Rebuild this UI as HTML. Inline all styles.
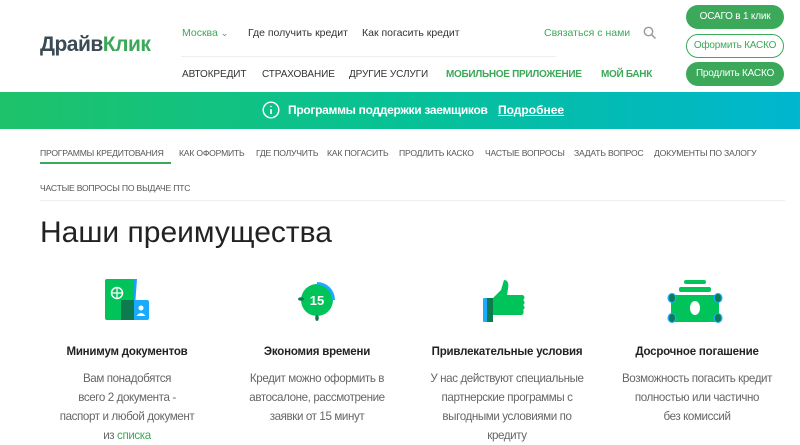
<!DOCTYPE html>
<html><head><meta charset="utf-8"><style>
*{margin:0;padding:0;box-sizing:border-box}
body{width:800px;height:445px;overflow:hidden;background:#fff;font-family:"Liberation Sans",sans-serif;color:#333;position:relative}
.a{position:absolute;white-space:nowrap}
.btn{position:absolute;left:686px;width:98px;height:24px;border-radius:12px;background:#3ca85a;color:#fff;font-size:10px;text-align:center;line-height:24px;letter-spacing:-0.2px}
.tab{position:absolute;top:148px;font-size:8.6px;color:#555;letter-spacing:-0.2px}
.n2{position:absolute;top:69px;font-size:10px;color:#333;white-space:nowrap;letter-spacing:-0.1px}
.col{position:absolute;width:190px;text-align:center}
.col h3{font-size:11.5px;font-weight:bold;color:#222;position:absolute;top:346px;width:190px;letter-spacing:-0.2px}
.col p{font-size:11.6px;line-height:19px;color:#666;position:absolute;top:369px;width:190px;letter-spacing:-0.4px}
</style></head><body>
<div class="a" style="left:40px;top:33px;font-size:21px;font-weight:bold;color:#3b4a55;letter-spacing:-0.5px">Драйв<span style="color:#3ca85a">Клик</span></div>
<div class="a" style="left:182px;top:27px;font-size:10.5px;color:#3ca85a">Москва <span style="font-size:9px">&#8964;</span></div>
<div class="a" style="left:248px;top:27px;font-size:10.5px;color:#333">Где получить кредит</div>
<div class="a" style="left:362px;top:27px;font-size:10.5px;color:#333">Как погасить кредит</div>
<div class="a" style="left:544px;top:27px;font-size:10.5px;color:#3ca85a">Связаться с нами</div>
<svg class="a" style="left:643px;top:26px" width="14" height="14"><circle cx="5.5" cy="5.5" r="4.2" fill="none" stroke="#999" stroke-width="1.4"/><path d="M8.6 8.6L12.5 12.5" stroke="#999" stroke-width="1.5"/></svg>
<div class="a" style="left:181px;top:56px;width:375px;height:1px;background:#eee"></div>
<div class="n2" style="left:182px">АВТОКРЕДИТ</div>
<div class="n2" style="left:262px">СТРАХОВАНИЕ</div>
<div class="n2" style="left:349px">ДРУГИЕ УСЛУГИ</div>
<div class="n2" style="left:446px;color:#3ca85a;font-weight:bold;letter-spacing:-0.3px">МОБИЛЬНОЕ ПРИЛОЖЕНИЕ</div>
<div class="n2" style="left:601px;color:#3ca85a;font-weight:bold;letter-spacing:-0.3px">МОЙ БАНК</div>
<div class="btn" style="top:5px">ОСАГО в 1 клик</div>
<div class="btn" style="top:34px;background:#fff;color:#3ca85a;border:1px solid #3ca85a;line-height:22px">Оформить КАСКО</div>
<div class="btn" style="top:62px">Продлить КАСКО</div>
<div class="a" style="left:0;top:92px;width:800px;height:37px;background:linear-gradient(90deg,#1ec26a,#07c195 50%,#00b6d0)"></div>
<svg class="a" style="left:262px;top:101px" width="18" height="18"><circle cx="9" cy="9" r="7.8" fill="none" stroke="#fff" stroke-width="1.4"/><path d="M9 8v5M9 5v1" stroke="#fff" stroke-width="1.6"/></svg>
<div class="a" style="left:288px;top:103px;font-size:12px;font-weight:bold;color:#fff;letter-spacing:-0.3px">Программы поддержки заемщиков</div>
<div class="a" style="left:498px;top:103px;font-size:12px;font-weight:bold;color:#fff;text-decoration:underline">Подробнее</div>
<div class="tab" style="left:40px">ПРОГРАММЫ КРЕДИТОВАНИЯ</div>
<div class="a" style="left:40px;top:162px;width:131px;height:2px;background:#3ca85a"></div>
<div class="tab" style="left:179px">КАК ОФОРМИТЬ</div>
<div class="tab" style="left:256px">ГДЕ ПОЛУЧИТЬ</div>
<div class="tab" style="left:327px">КАК ПОГАСИТЬ</div>
<div class="tab" style="left:399px">ПРОДЛИТЬ КАСКО</div>
<div class="tab" style="left:485px">ЧАСТЫЕ ВОПРОСЫ</div>
<div class="tab" style="left:574px">ЗАДАТЬ ВОПРОС</div>
<div class="tab" style="left:654px">ДОКУМЕНТЫ ПО ЗАЛОГУ</div>
<div class="tab" style="left:40px;top:183px">ЧАСТЫЕ ВОПРОСЫ ПО ВЫДАЧЕ ПТС</div>
<div class="a" style="left:40px;top:200px;width:745px;height:1px;background:#eee"></div>
<div class="a" style="left:40px;top:216px;font-size:30px;color:#222">Наши преимущества</div>
<svg class="a" style="left:100px;top:278px" width="52" height="44"><rect x="5" y="1" width="30" height="41" rx="2" fill="#00c35a"/><path d="M34 1l3 0-3 41z" fill="#1aa0ff"/><rect x="21" y="22" width="28" height="20" rx="2" fill="#1aabff"/><rect x="21" y="22" width="13" height="20" fill="#0d7a50"/><circle cx="17" cy="15" r="5.5" fill="none" stroke="#fff" stroke-width="1.5"/><path d="M11.5 15h11M17 9.5v11" stroke="#fff" stroke-width="1.2"/><circle cx="41" cy="30" r="2.5" fill="#fff"/><path d="M36.5 38q4.5-6 9 0z" fill="#fff"/></svg>
<svg class="a" style="left:295px;top:278px" width="46" height="48"><circle cx="22" cy="22" r="16" fill="#00c35a"/><path d="M22 4a18 18 0 0 1 18 18h-3a15 15 0 0 0-15-15z" fill="#1aabff"/><ellipse cx="6" cy="21" rx="3" ry="1.8" fill="#0d7a50"/><ellipse cx="22" cy="40" rx="1.8" ry="3" fill="#0d7a50"/><text x="22" y="27" font-size="13" font-weight="bold" fill="#fff" text-anchor="middle" font-family="Liberation Sans">15</text></svg>
<svg class="a" style="left:480px;top:278px" width="54" height="46"><rect x="3" y="20" width="10" height="24" rx="1" fill="#1aabff"/><rect x="7" y="20" width="6" height="24" fill="#0d7a50"/><path d="M13 20l8-8 3-10c4 0 5 4 4 9l-1 6h15c3 0 3 4 1 5 2 1 2 4 0 5 2 1 2 4 0 5 1 1 1 5-2 5H13z" fill="#00c35a"/></svg>
<svg class="a" style="left:666px;top:278px" width="58" height="46"><rect x="18" y="2" width="22" height="4" rx="2" fill="#00c35a"/><rect x="13" y="9" width="32" height="5" rx="2" fill="#00c35a"/><rect x="5" y="17" width="48" height="27" fill="#00c35a"/><ellipse cx="6" cy="20" rx="4.5" ry="5" fill="#1aabff"/><ellipse cx="52" cy="20" rx="4.5" ry="5" fill="#1aabff"/><ellipse cx="6" cy="40" rx="4.5" ry="5" fill="#1aabff"/><ellipse cx="52" cy="40" rx="4.5" ry="5" fill="#1aabff"/><ellipse cx="6" cy="20" rx="3" ry="4" fill="#0d7a50"/><ellipse cx="52" cy="20" rx="3" ry="4" fill="#0d7a50"/><ellipse cx="6" cy="40" rx="3" ry="4" fill="#0d7a50"/><ellipse cx="52" cy="40" rx="3" ry="4" fill="#0d7a50"/><ellipse cx="29" cy="30" rx="5" ry="7" fill="#fff"/></svg>
<div class="col" style="left:32px"><h3>Минимум документов</h3><p>Вам понадобятся<br>всего 2 документа -<br>паспорт и любой документ<br>из <span style="color:#3ca85a">списка</span></p></div>
<div class="col" style="left:222px"><h3>Экономия времени</h3><p>Кредит можно оформить в<br>автосалоне, рассмотрение<br>заявки от 15 минут</p></div>
<div class="col" style="left:412px"><h3>Привлекательные условия</h3><p>У нас действуют специальные<br>партнерские программы с<br>выгодными условиями по<br>кредиту</p></div>
<div class="col" style="left:602px"><h3>Досрочное погашение</h3><p>Возможность погасить кредит<br>полностью или частично<br>без комиссий</p></div>
</body></html>
